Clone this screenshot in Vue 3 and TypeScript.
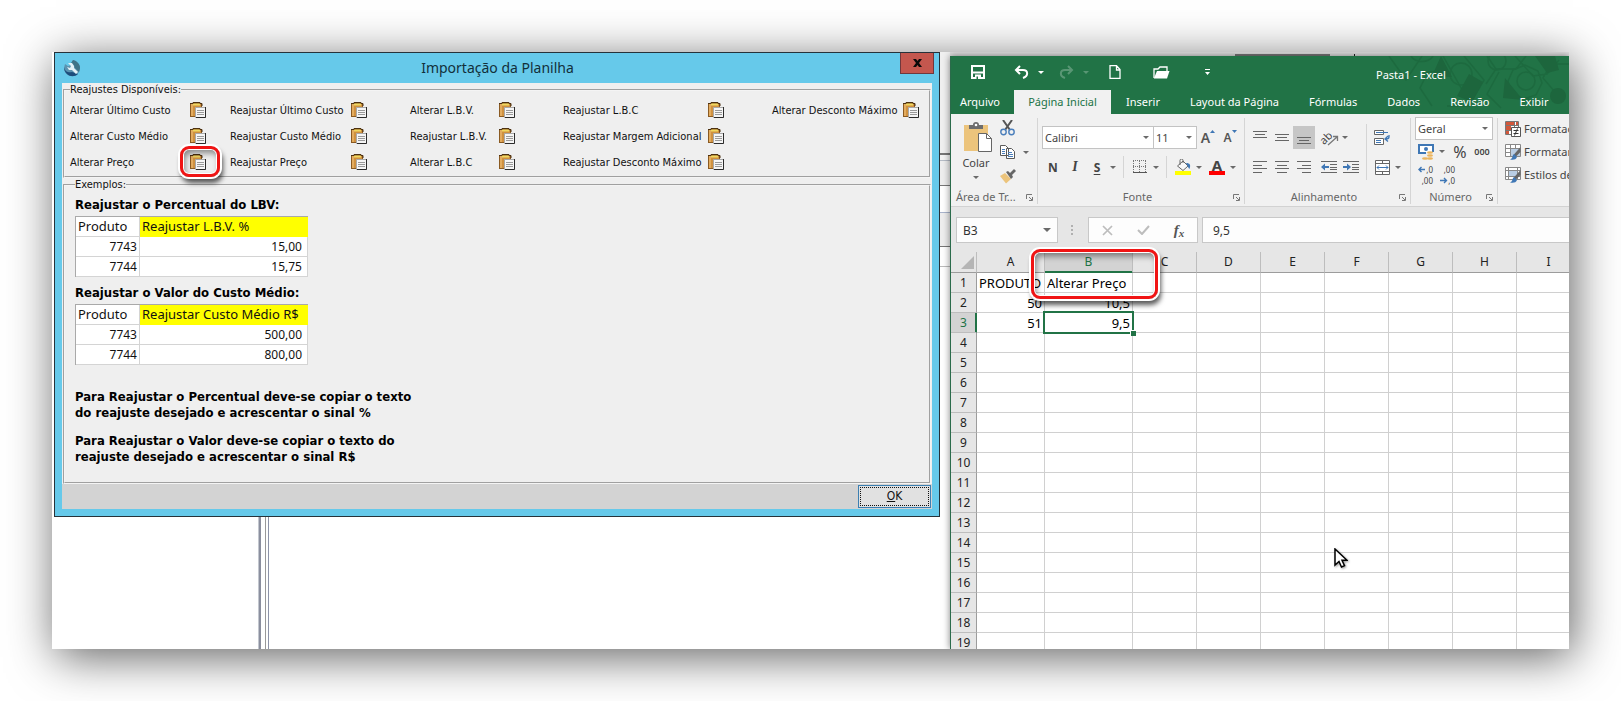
<script setup lang="ts">
import { ref } from 'vue'

interface Adjustment { label: string; marked?: boolean }
interface Example { title: string; column: string; rows: [string, string][] }

const adjustments: Adjustment[] = [
  { label: 'Alterar Último Custo' },
  { label: 'Reajustar Último Custo' },
  { label: 'Alterar L.B.V.' },
  { label: 'Reajustar L.B.C' },
  { label: 'Alterar Desconto Máximo' },
  { label: 'Alterar Custo Médio' },
  { label: 'Reajustar Custo Médio' },
  { label: 'Reajustar L.B.V.' },
  { label: 'Reajustar Margem Adicional' },
  { label: '' },
  { label: 'Alterar Preço', marked: true },
  { label: 'Reajustar Preço' },
  { label: 'Alterar L.B.C' },
  { label: 'Reajustar Desconto Máximo' },
]

const examples: Example[] = [
  { title: 'Reajustar o Percentual do LBV:', column: 'Reajustar L.B.V. %', rows: [['7743', '15,00'], ['7744', '15,75']] },
  { title: 'Reajustar o Valor do Custo Médio:', column: 'Reajustar Custo Médio R$', rows: [['7743', '500,00'], ['7744', '800,00']] },
]

const tabs = ['Página Inicial', 'Inserir', 'Layout da Página', 'Fórmulas', 'Dados', 'Revisão', 'Exibir']
const activeTab = ref('Página Inicial')
const columns = ['A', 'B', 'C', 'D', 'E', 'F', 'G', 'H', 'I']
const cells: Record<string, string> = { A1: 'PRODUTO', B1: 'Alterar Preço', A2: '50', B2: '10,5', A3: '51', B3: '9,5' }
const cellName = ref('B3')
const formula = ref('9,5')
</script>

<template>
  <main class="page">
    <div class="desktop">
      <div class="splitter" aria-hidden="true"></div>

      <section class="dialog" aria-labelledby="dialog-title">
        <header class="dialog-bar">
          <svg class="app-icon" width="18" height="18" viewBox="0 0 18 18">
            <path d="M2 5l3 2 3-1 2-5c4 1 7 4 7 8 0 5-4 8-8 8s-8-3-8-8z" fill="#5b93b0" />
            <path d="M1 8c1 5 5 6 8 5l6 2c-3 3-8 3-11 0-2-2-3-4-3-7z" fill="#1d4d7c" />
            <path d="M10 1c4 1 7 4 7 8l-1 4-4-4-1-3-3-2z" fill="#3f7488" />
            <path d="M5 4l4 0 2 3 0 2 4 4-2 2-4-4-3 0-2-3 3 1 1-2z" fill="#e4f2f7" />
          </svg>
          <h1 id="dialog-title">Importação da Planilha</h1>
          <button class="close" type="button" aria-label="Fechar">
            <svg width="9" height="8" viewBox="0 0 9 8"><path d="M0 0h3l1.500 2L6 0h3L6 4l3 4H6L4.500 6 3 8H0l3-4z" fill="#0a0a0a" /></svg>
          </button>
        </header>
        <div class="dialog-body">
          <fieldset>
            <legend>Reajustes Disponíveis:</legend>
            <div class="adjustments">
              <template v-for="(item, i) in adjustments" :key="i">
                <span :id="`adj-${i}`">{{ item.label }}</span>
                <span v-if="!item.label"></span>
                <button v-else class="paste" :class="{ marked: item.marked }" type="button" :aria-labelledby="`adj-${i}`">
                  <svg width="16" height="16" viewBox="0 0 16 16">
                    <rect x="0.5" y="1.500" width="11" height="13" fill="#cf9140" stroke="#8a5a22" />
                    <path d="M1 2h2v12H1z" fill="#e3ac5f" />
                    <path d="M3 2.500h7" stroke="#f0d860" stroke-width="2" />
                    <path d="M0 1.500h3V.5h7v1h2V4" fill="none" stroke="#4d3110" />
                    <path d="M5.500 5.500h10v10h-10z" fill="#f6f6f6" stroke="#a8a8a8" />
                    <path d="M15.500 5v10.500H6" fill="none" stroke="#2b2b2b" />
                    <path d="M7 8.500h7M7 10.500h7M7 12.500h7" stroke="#9a9a9a" />
                  </svg>
                </button>
              </template>
            </div>
          </fieldset>
          <fieldset class="examples">
            <legend>Exemplos:</legend>
            <section v-for="example in examples" :key="example.title" class="example">
              <h2>{{ example.title }}</h2>
              <table class="sample">
                <thead><tr><th>Produto</th><th class="hot">{{ example.column }}</th></tr></thead>
                <tbody>
                  <tr v-for="row in example.rows" :key="row[0]"><td>{{ row[0] }}</td><td>{{ row[1] }}</td></tr>
                </tbody>
              </table>
            </section>
            <div class="notes">
              <p>Para Reajustar o Percentual deve-se copiar o texto<br />do reajuste desejado e acrescentar o sinal %</p>
              <p>Para Reajustar o Valor deve-se copiar o texto do<br />reajuste desejado e acrescentar o sinal R$</p>
            </div>
          </fieldset>
          <footer class="dialog-foot"><button type="button" class="ok"><span><u>O</u>K</span></button></footer>
        </div>
      </section>

      <div class="gutter" aria-hidden="true"></div>

      <div class="right">
        <div class="behind" aria-hidden="true"></div>
        <section class="excel" aria-label="Pasta1 - Excel">
          <div class="green">
            <svg class="pattern" width="182" height="58" viewBox="0 0 182 58" aria-hidden="true">
              <g fill="none" stroke="#1d6a3f" stroke-width="1.500">
                <path d="M2 0l17 24 16-24M24 0a12 9 0 0 0 22 0M77 0l20 24-15 26H60M56 0l26 46M45 50l-12-18 8-16 18-2M100 0l9 13-10 15M109 13h20M129 13l10-13M128 0l18 20 14-2 12-14M112 16l-12 22 14 14M168 36l-12-14 8-14h18M140 42l10 8h8" />
                <circle cx="74" cy="18" r="11" /><circle cx="110" cy="5" r="9" />
                <path d="M126 14l12-5 13 6 4 12-6 12-13 4-12-7-3-11z" /><circle cx="139" cy="25" r="9" />
              </g>
              <g fill="#1d663d"><path d="M54 0l11 21-20-1zM82 18l14 8-11 20-15-6zM118 22l18 22-20-2zM148 0h20l4 14-12 3z" /><circle cx="171" cy="40" r="8" /></g>
            </svg>
            <div class="titlebar">
              <div class="quick">
                <button type="button" class="q-save" aria-label="Salvar"><svg width="14" height="14" viewBox="0 0 14 14"><path d="M0 0h14v14H0zM2 2v4.500h10V2zM2 8.500V12h2V9.500h6V12h2V8.500zM5.500 11.500V14H7v-2.500z" fill="#fff" fill-rule="evenodd" /></svg></button>
                <button type="button" class="q-undo" aria-label="Desfazer"><svg width="15" height="14" viewBox="0 0 15 14"><path d="M6 1L2 5l4 4M2.500 5H9c5 0 6 6 0 8" fill="none" stroke="#fff" stroke-width="2" /></svg><i class="caret light"></i></button>
                <button type="button" class="q-redo" aria-label="Refazer"><svg width="15" height="14" viewBox="0 0 15 14"><path d="M9 1l4 4-4 4M12.500 5H6c-5 0-6 6 0 8" fill="none" stroke="#fff" stroke-width="2" /></svg><i class="caret light"></i></button>
                <button type="button" class="q-new" aria-label="Novo"><svg width="12" height="14" viewBox="0 0 12 14"><path d="M1 .7h6.500L11 4.500v8.800H1zM7.500 1v4H11" fill="none" stroke="#fff" stroke-width="1.300" /></svg></button>
                <button type="button" class="q-open" aria-label="Abrir"><svg width="17" height="13" viewBox="0 0 17 13"><path d="M1 12V3h4l2-2h7v4" fill="none" stroke="#fff" stroke-width="1.300" /><path d="M1 12L4 5h12.500L14 12.500H1z" fill="#fff" /></svg></button>
                <button type="button" class="q-more" aria-label="Personalizar"><svg width="5" height="6" viewBox="0 0 5 6"><path d="M0 0h5v1H0zM0 3h5L2.500 6z" fill="#fff" /></svg></button>
              </div>
              <span class="doc">Pasta1 - Excel</span>
            </div>
            <nav class="tabs">
              <button type="button" class="tab file">Arquivo</button>
              <button v-for="tab in tabs" :key="tab" type="button" class="tab" :class="{ active: tab === activeTab }" @click="activeTab = tab">{{ tab }}</button>
            </nav>
          </div>

          <div class="ribbon">
            <div class="group clipboard">
              <div class="content">
                <button type="button" class="paste-big">
                  <svg width="28" height="30" viewBox="0 0 28 30">
                    <path d="M0 3h24v26H0z" fill="#ecc47c" /><path d="M5 7V3h4a3 3 0 0 1 6 0h4v4z" fill="#6d6d6d" /><circle cx="12" cy="3" r="1.300" fill="#fff" />
                    <path d="M14.500 11.500h8l5 5v13h-13z" fill="#fff" stroke="#666" /><path d="M22.500 11.500v5h5" fill="none" stroke="#666" />
                  </svg>
                  <span>Colar</span><i class="caret"></i>
                </button>
                <div class="smalls">
                  <button type="button" aria-label="Recortar"><svg width="15" height="16" viewBox="0 0 15 16"><path d="M3 0l7 10M12 0L5 10" stroke="#555" stroke-width="2" fill="none" /><circle cx="3.500" cy="12" r="2.700" fill="none" stroke="#4a7ebb" stroke-width="1.400" /><circle cx="11.500" cy="12" r="2.700" fill="none" stroke="#4a7ebb" stroke-width="1.400" /></svg></button>
                  <button type="button" aria-label="Copiar"><svg width="16" height="14" viewBox="0 0 16 14"><path d="M.5.500h5l3 3v7h-8zM6.500 3.500h5l3 3v7h-8z" fill="#fff" stroke="#5a5a5a" /><path d="M2 4.500h3M2 6.500h3M2 8.500h3M8 7.500h4M8 9.500h5M8 11.500h5" stroke="#4a7ebb" /></svg><i class="caret"></i></button>
                  <button type="button" aria-label="Pincel de Formatação"><svg width="16" height="15" viewBox="0 0 16 15"><path d="M5 4l6 6-5 4.500L0 7z" fill="#ecc47c" /><path d="M6 3l2-1 2 2 4-4 2 2-4 4 1 2-2 2z" fill="#666" /></svg></button>
                </div>
              </div>
              <div class="group-foot"><span>Área de Tr...</span><svg class="launch" width="7" height="7" viewBox="0 0 7 7"><path d="M.5 5V.5H6M3 3l3 3M6.500 3v3.500H3" fill="none" stroke="#777" /></svg></div>
            </div>

            <div class="group font">
              <div class="content column">
                <div class="row first">
                  <label class="combo family"><select aria-label="Fonte"><option>Calibri</option></select><i class="caret"></i></label>
                  <label class="combo size"><select aria-label="Tamanho"><option>11</option></select><i class="caret"></i></label>
                  <button type="button" class="tool" aria-label="Aumentar fonte"><span class="grow">A</span><svg width="5" height="3" viewBox="0 0 5 3"><path d="M0 3L2.500 0 5 3z" fill="#3f77b5" /></svg></button>
                  <button type="button" class="tool" aria-label="Diminuir fonte"><span class="shrink">A</span><svg width="5" height="3" viewBox="0 0 5 3"><path d="M0 0L2.500 3 5 0z" fill="#3f77b5" /></svg></button>
                </div>
                <div class="row">
                  <button type="button" class="tool"><b>N</b></button>
                  <button type="button" class="tool"><em>I</em></button>
                  <button type="button" class="tool"><b class="under">S</b></button>
                  <i class="caret drop"></i><i class="sep"></i>
                  <button type="button" class="tool" aria-label="Bordas"><svg width="14" height="14" viewBox="0 0 14 14"><path d="M.5 1v12M6.500 1v12M12.500 1v12M0 .5h13M0 6.500h13" stroke="#777" stroke-dasharray="1 1" /><path d="M0 12.500h14" stroke="#555" /></svg></button>
                  <i class="caret drop"></i><i class="sep"></i>
                  <button type="button" class="tool" aria-label="Preenchimento"><svg width="16" height="16" viewBox="0 0 16 16"><path d="M2.500 7L8 2l5 5-5 4.500zM5 6V1.500A1.500 1.500 0 0 1 8 1.500V4" fill="#f8f8f8" stroke="#666" /><path d="M11 4c4 0 5 2 3.500 6C13 9 13 7 11 4z" fill="#3f77b5" /><path d="M0 12h16v4H0z" fill="#ff0" /></svg></button>
                  <i class="caret drop"></i>
                  <button type="button" class="tool color" aria-label="Cor da fonte"><b>A</b><i></i></button>
                  <i class="caret drop"></i>
                </div>
              </div>
              <div class="group-foot"><span>Fonte</span><svg class="launch" width="7" height="7" viewBox="0 0 7 7"><path d="M.5 5V.5H6M3 3l3 3M6.500 3v3.500H3" fill="none" stroke="#777" /></svg></div>
            </div>

            <div class="group align">
              <div class="content">
                <div class="column">
                  <div class="row first">
                    <button type="button" class="tool" aria-label="Alinhar acima"><svg width="14" height="14" viewBox="0 0 14 14"><path d="M0 1.500h14M2 4.500h10M0 7.500h14" stroke="#666" /></svg></button>
                    <button type="button" class="tool" aria-label="Alinhar no meio"><svg width="14" height="14" viewBox="0 0 14 14"><path d="M0 4.500h14M2 7.500h10M0 10.500h14" stroke="#666" /></svg></button>
                    <button type="button" class="tool on" aria-label="Alinhar embaixo"><svg width="14" height="16" viewBox="0 0 14 16"><path d="M0 8.500h14M2 11.500h10M0 14.500h14" stroke="#666" /></svg></button>
                    <i class="gap"></i>
                    <button type="button" class="tool" aria-label="Orientação"><span class="slant">ab</span><svg class="slant-arrow" width="12" height="12" viewBox="0 0 12 12"><path d="M1 11L10 3M6 2.500h4.500V7" fill="none" stroke="#777" stroke-width="1.300" /></svg></button>
                    <i class="caret drop"></i>
                  </div>
                  <div class="row">
                    <button type="button" class="tool" aria-label="Alinhar à esquerda"><svg width="14" height="12" viewBox="0 0 14 12"><path d="M0 .5h14M0 4.500h9M0 7.500h14M0 11.500h9" stroke="#666" /></svg></button>
                    <button type="button" class="tool" aria-label="Centralizar"><svg width="14" height="12" viewBox="0 0 14 12"><path d="M0 .5h14M2 4.500h10M0 7.500h14M2 11.500h10" stroke="#666" /></svg></button>
                    <button type="button" class="tool" aria-label="Alinhar à direita"><svg width="14" height="12" viewBox="0 0 14 12"><path d="M0 .5h14M5 4.500h9M0 7.500h14M5 11.500h9" stroke="#666" /></svg></button>
                    <i class="gap"></i>
                    <button type="button" class="tool" aria-label="Diminuir recuo"><svg width="16" height="12" viewBox="0 0 16 12"><path d="M0 .5h16M9 3.500h7M9 6.500h7M9 8.500h7M0 11.500h16" stroke="#666" /><path d="M0 6l4-3.500v2.500h4v2H4v2.500z" fill="#3f77b5" /></svg></button>
                    <button type="button" class="tool" aria-label="Aumentar recuo"><svg width="16" height="12" viewBox="0 0 16 12"><path d="M0 .5h16M9 3.500h7M9 6.500h7M9 8.500h7M0 11.500h16" stroke="#666" /><path d="M8 6L4 2.500v2.500H0v2h4v2.500z" fill="#3f77b5" /></svg></button>
                  </div>
                </div>
                <i class="sep tall"></i>
                <div class="column">
                  <div class="row first">
                    <button type="button" class="tool" aria-label="Quebrar texto"><svg width="16" height="15" viewBox="0 0 16 15"><path d="M.5.500h9v4h-9zM.5 8.500h9v6h-9z" fill="#fff" stroke="#666" /><path d="M2 2.500h12M2 10.500h5M2 12.500h5" stroke="#3f77b5" /><path d="M15 5v2q0 2-3 2M14 6l-3 3 3 2.500" fill="none" stroke="#3f77b5" stroke-width="1.300" /></svg></button>
                  </div>
                  <div class="row">
                    <button type="button" class="tool" aria-label="Mesclar"><svg width="15" height="15" viewBox="0 0 15 15"><path d="M.5.500h14v14H.5zM.5 3.500h14M.5 11.500h14M7.500.500v3M7.500 11.500v3" fill="#fff" stroke="#666" /><path d="M2 7.500h11M4 5.500l-2 2 2 2M11 5.500l2 2-2 2" fill="none" stroke="#3f77b5" /></svg></button>
                    <i class="caret drop"></i>
                  </div>
                </div>
              </div>
              <div class="group-foot"><span>Alinhamento</span><svg class="launch" width="7" height="7" viewBox="0 0 7 7"><path d="M.5 5V.5H6M3 3l3 3M6.500 3v3.500H3" fill="none" stroke="#777" /></svg></div>
            </div>

            <div class="group number">
              <div class="content column tight">
                <label class="combo general"><select aria-label="Formato de número"><option>Geral</option></select><i class="caret"></i></label>
                <div class="row">
                  <button type="button" class="tool" aria-label="Moeda"><svg width="16" height="16" viewBox="0 0 16 16"><path d="M1 1h14v8H1z" fill="#fff" stroke="#3f77b5" stroke-width="2" /><circle cx="8" cy="5" r="2" fill="#3f77b5" /><path d="M8 8h8v8H4v-4h4z" fill="#f1f1f1" /><ellipse cx="12" cy="8.500" rx="3" ry="1.300" fill="#ecb55e" /><ellipse cx="12" cy="11.500" rx="3" ry="1.300" fill="#ecb55e" /><ellipse cx="7" cy="14.500" rx="3" ry="1.300" fill="#ecb55e" /><ellipse cx="12" cy="14.500" rx="3" ry="1.300" fill="#ecb55e" /></svg></button>
                  <i class="caret drop"></i>
                  <button type="button" class="tool percent">%</button>
                  <button type="button" class="tool zeros">000</button>
                </div>
                <div class="row">
                  <button type="button" class="tool decimals" aria-label="Aumentar casas decimais"><span><svg width="8" height="7" viewBox="0 0 8 7"><path d="M7 3.500H1M3.500 1L1 3.500 3.500 6" fill="none" stroke="#3f77b5" stroke-width="1.400" /></svg>,0</span><span>,00</span></button>
                  <button type="button" class="tool decimals" aria-label="Diminuir casas decimais"><span>,00</span><span><svg width="8" height="7" viewBox="0 0 8 7"><path d="M0 3.500h6M4 1l2.500 2.500L4 6" fill="none" stroke="#3f77b5" stroke-width="1.400" /></svg>,0</span></button>
                </div>
              </div>
              <div class="group-foot"><span>Número</span><svg class="launch" width="7" height="7" viewBox="0 0 7 7"><path d="M.5 5V.5H6M3 3l3 3M6.500 3v3.500H3" fill="none" stroke="#777" /></svg></div>
            </div>

            <div class="group styles">
              <button type="button">
                <svg width="16" height="16" viewBox="0 0 16 16"><path d="M.5.500h13v13H.5zM.5 4.500h13M.5 9.500h13M9.500.500v13" fill="#fff" stroke="#777" /><path d="M1 1h8v3H1zM1 5h5v4H1zM1 10h3v3H1zM11 1h2v3h-2z" fill="#d2573a" /><path d="M6.500 6.500h9v9h-9z" fill="#fff" stroke="#555" /><path d="M8.500 9.500h5M8.500 12.500h5M12.500 7.500l-3 7" stroke="#333" /></svg>
                Formatação Condicional</button>
              <button type="button">
                <svg width="16" height="16" viewBox="0 0 16 16"><path d="M.5.500h15v12H.5zM.5 4.500h15M.5 8.500h15M5.500.500v12M10.500.500v12" fill="#fff" stroke="#888" /><path d="M6 5h9v7H6z" fill="#b9cde3" /><path d="M15.500 3v5l-5 5-2-2z" fill="#666" /><path d="M9 10l3 3c-1 3-4 3-7 2.500 3-1 2-4 4-5.500z" fill="#3f77b5" /></svg>
                Formatar como Tabela</button>
              <button type="button">
                <svg width="16" height="16" viewBox="0 0 16 16"><path d="M.5.500h15v12H.5zM.5 3.500h15M.5 9.500h15M3.500.500v12M12.500.500v12" fill="#fff" stroke="#888" /><path d="M4 4h8v5H4z" fill="#b9cde3" /><path d="M15.500 3v5l-5 5-2-2z" fill="#666" /><path d="M9 10l3 3c-1 3-4 3-7 2.500 3-1 2-4 4-5.500z" fill="#3f77b5" /></svg>
                Estilos de Célula</button>
            </div>
          </div>

          <div class="formula-bar">
            <label class="box name"><input v-model="cellName" aria-label="Caixa de nome" /><i class="caret wide"></i></label>
            <svg class="dots" width="3" height="11" viewBox="0 0 3 11"><path d="M0 0h2v2H0zM0 4h2v2H0zM0 8h2v2H0z" fill="#b0b0b0" /></svg>
            <div class="box entry">
              <button type="button" aria-label="Cancelar"><svg width="11" height="11" viewBox="0 0 11 11"><path d="M1 1l9 9M10 1l-9 9" stroke="#bdbdbd" stroke-width="1.700" /></svg></button>
              <button type="button" aria-label="Inserir"><svg width="13" height="10" viewBox="0 0 13 10"><path d="M1 5l4 4 7-8" fill="none" stroke="#bdbdbd" stroke-width="2" /></svg></button>
              <button type="button" class="fx" aria-label="Inserir função">f<small>x</small></button>
            </div>
            <label class="box value"><input v-model="formula" aria-label="Barra de fórmulas" /></label>
          </div>

          <div class="sheet-wrap">
            <table class="sheet">
              <colgroup><col class="c-row" /><col class="c-a" /><col class="c-b" /><col v-for="n in 7" :key="n" class="c-n" /></colgroup>
              <thead>
                <tr>
                  <th class="corner"><svg width="13" height="13" viewBox="0 0 13 13"><path d="M13 0v13H0z" fill="#b5b5b5" /></svg></th>
                  <th v-for="col in columns" :key="col" :class="{ picked: col === 'B' }">{{ col }}<i v-if="col === 'B'" class="callout"></i></th>
                </tr>
              </thead>
              <tbody>
                <tr v-for="r in 19" :key="r">
                  <th :class="{ picked: r === 3 }">{{ r }}</th>
                  <td v-for="col in columns" :key="col" :class="{ text: r === 1, current: col + r === 'B3' }">{{ cells[col + r] }}</td>
                </tr>
              </tbody>
            </table>
          </div>
        </section>
      </div>

      <svg class="pointer" width="14" height="21" viewBox="0 0 14 21" aria-hidden="true"><path d="M1 1v16l4-3.500 2.500 5.500 3-1.300L8 12.300h5z" fill="#fff" stroke="#000" stroke-width="1.500" /></svg>
    </div>
  </main>
</template>

<style>
body { margin: 0; background: #fff; }
</style>

<style scoped>
* { box-sizing: border-box; }
button { margin: 0; padding: 0; border: 0; background: none; font: inherit; color: inherit; }
svg { display: block; flex: none; }
.page { display: flex; height: 100vh; min-height: 600px; padding: 52px; overflow: hidden; font-family: "Noto Sans", "Open Sans", sans-serif; }
.desktop {
  position: relative; flex: 1; display: grid; grid-template-columns: minmax(0, 886fr) 10px minmax(0, 619fr);
  grid-template-rows: minmax(0, 1fr); padding-left: 2px; overflow: hidden; background: #fff; box-shadow: 4px 8px 44px rgba(0, 0, 0, .62);
}
.splitter {
  position: absolute; left: 206px; top: 0; bottom: 0; width: 11px;
  background: linear-gradient(90deg, #c3c7cf 1px, #8b8f9e 1px 3px, #fff 3px 7px, #999 7px 8px, #fff 8px 10px, #8d93a8 10px);
}

.dialog { position: relative; align-self: start; padding: 0 7px 7px; background: #66c9ea; border: 1px solid #26323a; }
.dialog-bar { display: flex; align-items: center; height: 30px; }
.app-icon { margin-left: 1px; }
.dialog-bar h1 { flex: 1; margin: 0; padding-left: 14px; text-align: center; font-size: 14px; line-height: 28px; font-weight: 400; color: #12303a; }
.close { display: flex; align-items: center; justify-content: center; align-self: flex-start; width: 34px; height: 21px; margin-right: -2px; background: #c4574e; border: 1px solid #70383c; border-top: 0; }
.dialog-body { background: #efefef; font-family: "DejaVu Sans Condensed", "DejaVu Sans", sans-serif; font-size: 11px; color: #111; }
fieldset { margin: 0 1px; min-width: 0; border: 2px groove #f4f4f4; padding: 0 5px; }
legend { padding: 0; line-height: 14px; }
.adjustments { display: grid; grid-template-columns: 120px 40px 121px 59px 89px 64px 145px 64px 131px 1fr; grid-auto-rows: 26px; align-items: center; padding-bottom: 1px; white-space: nowrap; }
.adjustments button { justify-self: start; }
.paste { position: relative; }
.marked::after, .callout {
  content: ""; position: absolute; border: 3px solid #f01414; border-radius: 9px; pointer-events: none;
  box-shadow: inset 0 0 0 1px #fff, inset 2px 4px 6px rgba(0, 0, 0, .45), 0 0 0 2px #fff, 2px 5px 5px 1px rgba(0, 0, 0, .65);
}
.marked::after { inset: -8px -14px -7px -10px; }

.examples { padding: 5px 10px 17px; }
.example { margin-bottom: 8px; }
.example h2 { margin: 0 0 3px; font-size: 13px; line-height: 16px; font-weight: 700; color: #000; }
.sample { width: 233px; table-layout: fixed; border-collapse: separate; border-spacing: 0; border: solid #a9a9a9; border-width: 1px 0 0 1px; background: #fff; font-family: "Noto Sans", sans-serif; font-size: 13px; line-height: 19px; white-space: nowrap; }
.sample th, .sample td { height: 20px; padding: 0 2px; border: solid #d4d4d4; border-width: 0 1px 1px 0; font-weight: 400; }
.sample th { text-align: left; }
.sample th:first-child { width: 64px; }
.sample td { font-size: 12px; text-align: right; }
.sample td + td { padding-right: 5px; }
.sample .hot { background: #ff0; border-color: #ff0; }
.notes { margin-top: 24px; font-size: 13px; line-height: 16px; font-weight: 700; color: #000; }
.notes p { margin: 0 0 12px; }
.notes p:last-child { margin: 0; }
.dialog-foot { display: flex; justify-content: flex-end; height: 25px; padding: 1px; background: #d3d3d3; }
.ok { width: 73px; padding: 1px; background: #e1e1e1; border: 1px solid #3c7fb1; font-size: 12px; line-height: 17px; }
.ok span { display: block; border: 1px dotted #111; }

.gutter {
  background: linear-gradient(#f0f0f0 101px, #777 101px 103px, #f4f4f4 103px 108px, #b5bcc6 108px 109px, #eee 109px 133px, #777 133px 134px, #fff 134px 160px, #a9b4cc 160px 161px, #eee 161px 194px, #777 194px 195px, #fff 195px 214px, #bbb 214px 215px, #fff 215px);
}
.right { display: flex; flex-direction: column; }
.behind { flex: none; height: 4px; background: linear-gradient(90deg, transparent 285px, #777 285px 380px, transparent 380px 404px, #222 404px 405px, transparent 405px) 0 2px no-repeat, #dedede; }
.excel { flex: 1; min-height: 0; display: flex; flex-direction: column; overflow: hidden; border-left: 1px solid #2b6b4b; background: #e6e6e6; box-shadow: 0 0 7px rgba(0, 0, 0, .5); font-size: 11px; color: #444; }
.green { position: relative; flex: none; background: #217346; color: #fff; }
.pattern { position: absolute; top: 0; right: 0; }
.titlebar { position: relative; display: flex; height: 34px; }
.quick { display: flex; align-items: center; flex: none; width: 425px; padding: 0 0 2px 20px; }
.quick button { display: flex; align-items: center; }
.quick .caret { margin-left: 9px; }
.q-undo { margin-left: 29px; }
.q-redo { margin-left: 15px; opacity: .25; }
.q-new { margin-left: 20px; }
.q-open { margin-left: 32px; }
.q-more { margin-left: 35px; }
.doc { line-height: 38px; white-space: nowrap; }
.caret { flex: none; width: 6px; height: 0; border: 3px solid transparent; border-top-color: #6a6a6a; border-bottom: 0; }
.caret.light { border-top-color: #fff; }
.caret.wide { border-width: 4px 4px 0; width: 8px; }
.caret.drop { margin: 0 2px; }
.tabs { position: relative; display: flex; height: 24px; white-space: nowrap; }
.tab { padding: 0 15px; line-height: 24px; }
.file { width: 63px; padding: 0 10px 0 5px; }
.active { padding: 0 14px; width: 97px; background: #f1f1f1; color: #217346; }

.ribbon { display: flex; flex: none; height: 93px; overflow: hidden; background: #f1f1f1; border-bottom: 1px solid #d2d2d2; }
.group { display: flex; flex-direction: column; flex: none; margin: 4px 0 2px; padding-left: 4px; border-right: 1px solid #d5d5d5; }
.content { display: flex; flex: 1; }
.column { display: flex; flex-direction: column; }
.clipboard { width: 87px; padding-left: 5px; }
.font { width: 207px; }
.align { width: 166px; }
.number { width: 87px; }
.group-foot { display: flex; align-items: center; height: 14px; padding-right: 4px; line-height: 14px; color: #666; }
.group-foot span { flex: 1; text-align: center; white-space: nowrap; }
.clipboard .group-foot span { text-align: left; }
.paste-big { display: flex; flex-direction: column; align-items: center; align-self: flex-start; width: 40px; padding-top: 4px; line-height: 17px; gap: 2px; }
.paste-big svg { margin-left: 4px; }
.paste-big .caret { margin-top: 3px; }
.smalls { display: flex; flex-direction: column; gap: 8px; margin-left: 4px; padding-top: 2px; }
.smalls button { display: flex; align-items: center; height: 16px; gap: 7px; }
.row { display: flex; align-items: center; height: 24px; }
.row.first { margin: 7px 0 6px; }
.combo { display: flex; align-items: center; height: 23px; padding-right: 4px; background: #fff; border: 1px solid #c3c3c3; }
.combo select { flex: 1; min-width: 0; height: 100%; padding: 0 0 0 2px; border: 0; appearance: none; background: none; font: 11px "Noto Sans", sans-serif; color: #444; }
.family { width: 112px; }
.size { width: 44px; margin-left: -1px; }
.general { width: 78px; height: 23px; }
.tool { position: relative; display: flex; align-items: center; justify-content: center; flex: none; width: 22px; height: 23px; font-size: 12px; }
.tool.on { background: #c6c6c6; }
.tool em { font-family: "Liberation Serif", serif; font-weight: 700; font-size: 14px; }
.under { text-decoration: underline; text-underline-offset: 2px; }
.grow { font-size: 14px; }
.shrink { font-size: 12px; }
.grow, .shrink { font-weight: 600; color: #555; }
.grow + svg, .shrink + svg { align-self: flex-start; margin-top: 4px; }
.sep { flex: none; width: 1px; height: 22px; margin: 0 5px; background: #d5d5d5; }
.sep.tall { height: 56px; margin: 6px 4px; }
.color { flex-direction: column; margin-left: 2px; font-size: 15px; line-height: 12px; }
.color i { width: 16px; height: 4px; background: #f00; }
.gap { width: 3px; }
.slant { display: block; transform: rotate(-45deg); margin-left: -8px; font-size: 11px; }
.slant-arrow { position: absolute; right: 1px; bottom: 3px; }
.tight { margin-top: -1px; }
.tight .row { height: 23px; }
.percent { font-size: 16px; margin-left: 2px; }
.zeros { font-size: 9px; font-weight: 600; }
.decimals { flex-direction: column; align-items: flex-end; padding-right: 4px; font-size: 8px; line-height: 11px; }
.decimals span { display: flex; align-items: center; }
.styles { padding-left: 7px; border: 0; width: 140px; gap: 7px; padding-top: 3px; }
.styles button { display: flex; align-items: center; gap: 3px; height: 16px; line-height: 16px; white-space: nowrap; }

.formula-bar { display: flex; flex: none; height: 45px; padding: 10px 0 9px 5px; }
.box { display: flex; align-items: center; background: #fdfdfd; border: 1px solid #c8c8c8; }
.box input { width: 100%; min-width: 0; padding: 0 7px; border: 0; outline: 0; background: none; font: 12px "Noto Sans", sans-serif; color: #333; }
.name { width: 102px; padding-right: 6px; }
.name input { padding-left: 6px; }
.dots { align-self: center; margin: 0 14px 0 13px; }
.entry { width: 110px; margin-right: 4px; }
.entry button { display: flex; justify-content: center; align-items: center; flex: 1; }
.entry .fx { font: italic 700 15px "Liberation Serif", serif; color: #555; }
.fx small { font-size: 11px; align-self: flex-end; }
.value { flex: 1; min-width: 0; border-right: 0; padding-left: 3px; }

.sheet-wrap { flex: 1; min-height: 0; }
.sheet { width: 630px; table-layout: fixed; border-collapse: separate; border-spacing: 0; background: #fff; font-size: 13px; line-height: 18px; color: #000; }
.c-row { width: 26px; }
.c-a { width: 68px; }
.c-b { width: 88px; }
.c-n { width: 64px; }
.sheet th { position: relative; height: 20px; padding: 0; border: solid #bdbdbd; border-width: 0 1px 1px 0; background: #e6e6e6; font-weight: 400; font-size: 12px; color: #222; }
.sheet thead th { height: 21px; border-bottom-color: #9c9c9c; }
.sheet tbody th { border-right-color: #9c9c9c; }
.sheet .corner svg { margin-left: 10px; }
.sheet th.picked { background: #d3d3d3; color: #217346; }
.sheet thead th.picked { box-shadow: inset 0 -1px #217346; border-bottom-color: #217346; }
.sheet tbody th.picked { box-shadow: inset -1px 0 #217346; border-right-color: #217346; }
.sheet td { position: relative; height: 20px; padding: 0 2px; border: solid #d0d0d0; border-width: 0 1px 1px 0; text-align: right; white-space: nowrap; }
.sheet td.text { text-align: left; }
.sheet td.current { z-index: 1; }
.current::before { content: ""; position: absolute; inset: -2px; border: 2px solid #217346; }
.current::after { content: ""; position: absolute; right: -4px; bottom: -4px; width: 5px; height: 5px; background: #217346; border: solid #fff; border-width: 1px 0 0 1px; box-sizing: content-box; }
.callout { left: -14px; right: -26px; top: -3px; height: 50px; z-index: 2; }
.pointer { position: absolute; left: 1282px; top: 496px; filter: drop-shadow(1px 1px 1px rgba(0, 0, 0, .4)); }
</style>
